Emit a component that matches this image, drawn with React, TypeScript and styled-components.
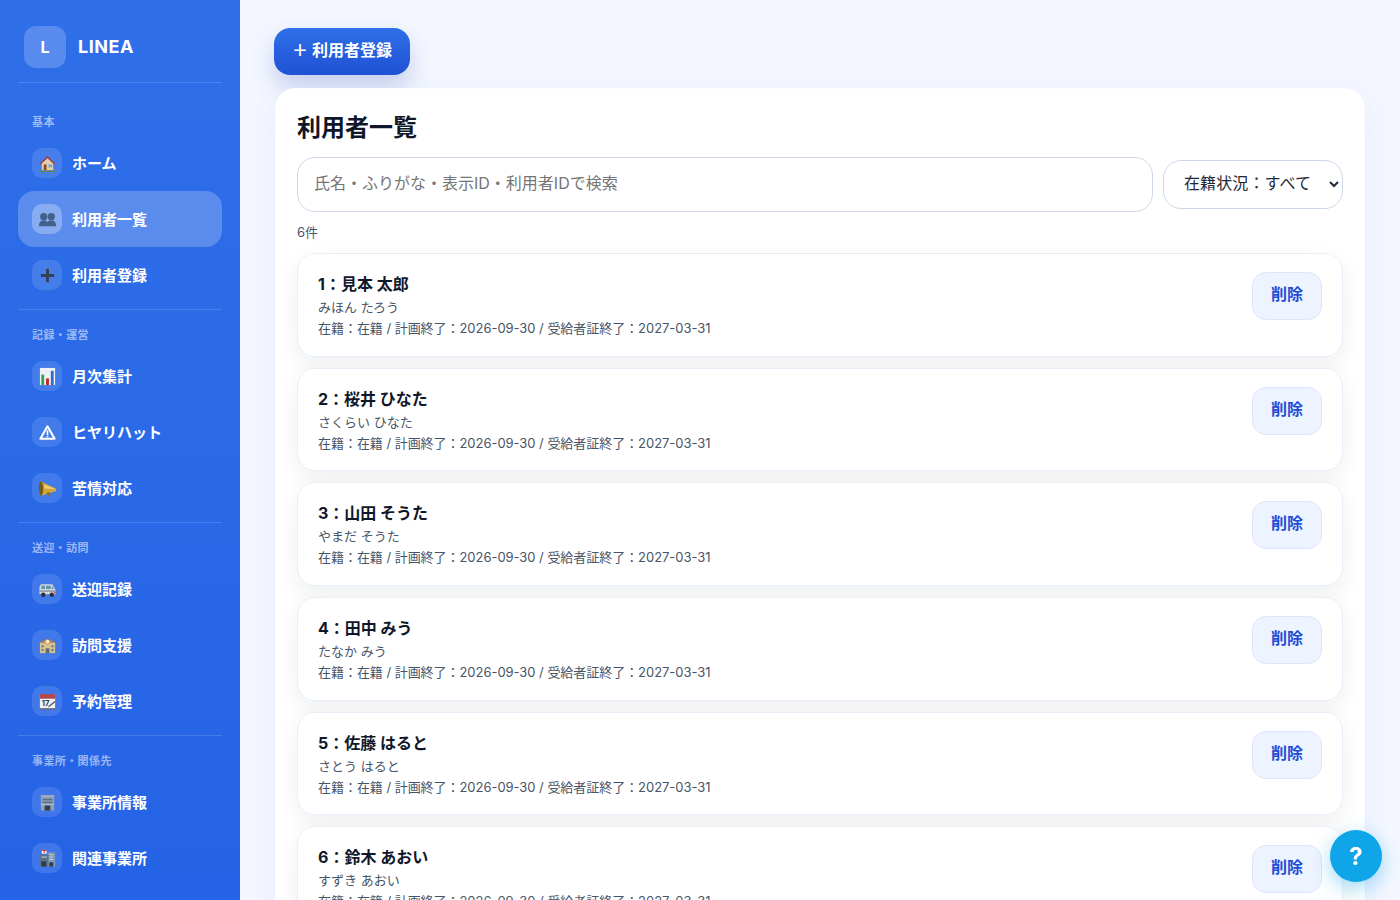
import React from "react";
import styled, { createGlobalStyle } from "styled-components";

const Global = createGlobalStyle`
  html, body { margin: 0; height: 900px; overflow: hidden; }
  body { font-family: Inter, "Noto Sans CJK JP", sans-serif; background: #f4f7ff; color: #0f172a; }
  * { box-sizing: border-box; }
`;
const Shell = styled.div`display: flex; height: 900px; overflow: hidden;`;
const Sidebar = styled.aside`
  width: 240px; flex: none; height: 900px; overflow: hidden; padding: 26px 18px 0;
  background: linear-gradient(180deg, #2f6fe9 0%, #2563e6 100%); color: #fff;
`;
const Brand = styled.div`
  display: flex; align-items: center; gap: 12px; padding: 0 6px 14px; height: 57px;
  border-bottom: 1px solid rgba(255,255,255,.14); margin-bottom: 31px;
`;
const BrandMark = styled.div`
  width: 42px; height: 42px; border-radius: 12px; background: rgba(255,255,255,.2);
  display: flex; align-items: center; justify-content: center; font-weight: 700; font-size: 16px;
`;
const BrandName = styled.div`font-size: 18px; font-weight: 700; letter-spacing: .5px; padding-bottom: 2px;`;
const Section = styled.div`
  & + & { border-top: 1px solid rgba(255,255,255,.14); margin-top: 6px; padding-top: 17px; }
`;
const SectionLabel = styled.div`
  font-size: 11px; line-height: 16px; font-weight: 600; color: rgba(255,255,255,.55); letter-spacing: .4px;
  padding-left: 14px; margin-bottom: 4px; height: 17px;
`;
const NavItem = styled.div<{ $active?: boolean }>`
  display: flex; align-items: center; gap: 10px; height: 56px; padding: 0 14px; border-radius: 16px;
  font-size: 15px; font-weight: 600; color: #fff;
  background: ${p => (p.$active ? "rgba(255,255,255,.22)" : "transparent")};
`;
const NavText = styled.span`padding-bottom: 2px;`;
const NavIcon = styled.span<{ $active?: boolean }>`
  width: 30px; height: 30px; border-radius: 10px; flex: none;
  display: flex; align-items: center; justify-content: center;
  background: ${p => (p.$active ? "rgba(255,255,255,.28)" : "rgba(255,255,255,.12)")};
`;
const Glyph = styled.svg`width: 19px; height: 19px; display: block;`;
const Main = styled.main`flex: 1; min-width: 0; padding: 28px 35px 0 34px;`;
const AddButton = styled.button`
  display: block; width: 136px; height: 47px; border: 0; border-radius: 16px; color: #fff; padding: 0 0 5px;
  font: 700 16px Inter, "Noto Sans CJK JP", sans-serif;
  background: linear-gradient(180deg, #2f6fe9, #1f52d4);
  box-shadow: 0 12px 24px rgba(30, 64, 175, .22); margin-bottom: 13px;
`;
const Panel = styled.section`
  margin-left: 1px; background: #fff; border-radius: 20px; padding: 21px 21px 0;
  border: 1px solid #fbfcff; box-shadow: 0 10px 30px rgba(37,99,235,.07); height: 830px; overflow: hidden;
`;
const Title = styled.h1`font-size: 24px; line-height: 36px; font-weight: 700; margin: 0 0 11px; color: #0f172a;`;
const Filters = styled.div`display: flex; align-items: center; gap: 10px;`;
const Search = styled.input`
  flex: 1; height: 55px; border: 1px solid #ccd7e8; border-radius: 18px; padding: 0 16px 3px;
  font: 400 16px Inter, "Noto Sans CJK JP", sans-serif; outline: none; background: #fff;
  &::placeholder { color: #757575; }
`;
const Select = styled.select`
  width: 180px; height: 49px; border: 1px solid #ccd7e8; border-radius: 18px; padding: 0 0 3px 16px;
  background: #fff; color: #1f2937; font: 400 16px Inter, "Noto Sans CJK JP", sans-serif; letter-spacing: .1px;
`;
const Count = styled.div`font-size: 13px; line-height: 20px; color: #475569; margin: 10px 0 11px;`;
const List = styled.div`display: flex; flex-direction: column; gap: 11px;`;
const Row = styled.article`
  display: flex; justify-content: space-between; align-items: flex-start; height: 103.7px;
  padding: 18px 20px; border: 1px solid #e8effb; border-radius: 18px; background: #fff;
  box-shadow: 0 8px 22px rgba(15,23,42,.07);
`;
const RowName = styled.div`font-size: 16px; line-height: 24px; font-weight: 700; color: #0f172a; margin-bottom: 1px;`;
const RowKana = styled.div`font-size: 13px; line-height: 20px; color: #475569;`;
const RowMeta = styled.div`font-size: 13px; line-height: 20px; color: #475569; letter-spacing: -.04px; margin-top: 1px;`;
const DeleteButton = styled.button`
  width: 70px; height: 48px; border: 1px solid #dbe6fb; border-radius: 14px; background: #eef4ff; color: #1d4ed8;
  font: 700 16px Inter, "Noto Sans CJK JP", sans-serif; padding: 0 0 6px;
`;
const Help = styled.button`
  position: fixed; right: 18px; bottom: 18px; width: 52px; height: 52px; border-radius: 50%; border: 0;
  background: #0ea5e9; color: #fff; font: 700 24px Inter, sans-serif; box-shadow: 0 6px 20px rgba(14,165,233,.4);
`;

const icons: Record<string, React.ReactNode> = {
  home: <>
    <path d="M2 10 10 2l8 8-1 1-7-6.500L3 11z" fill="#a5393a" />
    <path d="M4 10 10 4.500l6 5.500v7H4z" fill="#e6cfa6" />
    <rect x="6" y="11" width="3" height="6" fill="#8a4b32" /><rect x="11" y="11" width="4" height="3" fill="#6fa9d8" />
    <path d="M1.500 17.500h17V19h-17z" fill="#5f8a56" />
  </>,
  people: <g fill="#41618a">
    <circle cx="6" cy="7" r="3.800" /><path d="M1 17c0-4 1.500-6 5-6s5 2 5 6z" />
    <circle cx="14" cy="7" r="3.800" /><path d="M9 17c0-4 1.500-6 5-6s5 2 5 6z" />
  </g>,
  plus: <path d="M8.500 3h3v5.500H17v3h-5.500V17h-3v-5.500H3v-3h5.500z" fill="#364152" />,
  chart: <>
    <rect x="2" y="1" width="16" height="18" fill="#eef2f6" />
    <rect x="3.500" y="8" width="3" height="11" fill="#2aa84a" /><rect x="8.500" y="12" width="3" height="7" fill="#c8202a" /><rect x="13.500" y="4" width="3" height="15" fill="#2a6fc9" />
  </>,
  warning: <>
    <path d="M10 3.500 17.500 16.500h-15z" fill="none" stroke="#fff" strokeWidth="2.200" strokeLinejoin="round" />
    <path d="M9.100 7.500h1.800v5H9.100zM9.100 13.300h1.800v1.600H9.100z" fill="#fff" />
  </>,
  megaphone: <>
    <path d="M3 2.500 19 10v2.500L3.500 17.500z" fill="#d2a738" />
    <path d="M3 2.500c1.500 0 2.500 3.500 2.500 7.500s-1 7.500-2 7.500S1 14 1 10s.500-7.500 2-7.500z" fill="#7a5c17" />
    <path d="M7 6 18 10.500 7 10z" fill="#ecd27a" />
    <path d="M9 14.500l3-1 1 3.500-2.500.8z" fill="#8f7023" />
  </>,
  van: <>
    <path d="M3 4.500h12l3.500 6v4.500h-17V8z" fill="#d5d9df" />
    <rect x="3.500" y="6" width="4" height="3.500" fill="#5f97ad" /><rect x="8.500" y="6" width="5" height="3.500" fill="#5f97ad" /><path d="M14.500 6l2.500 3.500h-2.500z" fill="#5f97ad" />
    <rect x="1.500" y="11" width="17" height="1.300" fill="#7d8794" /><rect x="16.800" y="12.500" width="1.700" height="1.500" fill="#d23a3a" />
    <circle cx="5.500" cy="15.500" r="2.300" fill="#2b3038" /><circle cx="14.500" cy="15.500" r="2.300" fill="#2b3038" />
  </>,
  school: <>
    <rect x="2" y="7" width="16" height="11" fill="#d9c48f" /><path d="M1.500 7 7 4.500h6L18.500 7z" fill="#d77f3a" />
    <circle cx="10" cy="6" r="2.700" fill="#f2e6c2" stroke="#a0713a" strokeWidth=".7" />
    <rect x="8" y="13" width="4" height="5" fill="#5d6a74" />
    <g fill="#6f8a9a"><rect x="3.500" y="9.500" width="2.500" height="2.500" /><rect x="14" y="9.500" width="2.500" height="2.500" /><rect x="3.500" y="13.500" width="2.500" height="2.500" /><rect x="14" y="13.500" width="2.500" height="2.500" /></g>
  </>,
  calendar: <>
    <rect x="2" y="2" width="16" height="16" rx="1" fill="#f1f2f4" /><path d="M3 2h14a1 1 0 0 1 1 1v4H2V3a1 1 0 0 1 1-1z" fill="#b04a4f" />
    <rect x="2" y="17" width="16" height="1.500" fill="#656b75" />
    <text x="4" y="15" fontSize="8" fontWeight="700" fontFamily="Inter, sans-serif" fill="#333a45">17</text>
    <path d="M11 15.500 18 10" stroke="#4a5058" strokeWidth="1.200" />
  </>,
  office: <>
    <rect x="3" y="2.500" width="14" height="16" fill="#8ea2b3" /><rect x="3" y="2.500" width="14" height="1.500" fill="#a9b5bf" />
    <g fill="#54708a"><rect x="5" y="6" width="10" height="1.700" /><rect x="5" y="9" width="10" height="1.700" /></g>
    <rect x="7" y="13" width="6" height="5.500" fill="#333f4d" /><rect x="3" y="12" width="14" height=".8" fill="#c4ccd4" />
  </>,
  dept: <>
    <rect x="10" y="3.500" width="8" height="15" fill="#7d99b3" /><rect x="2" y="6" width="9" height="12.500" fill="#59738c" />
    <rect x="4" y="1" width="5" height="4" fill="#f4f4f4" /><rect x="6" y="1.500" width="1" height="3" fill="#d22f37" /><rect x="4" y="1" width="5" height="1" fill="#d22f37" />
    <g fill="#c8d5e0"><rect x="12" y="5.500" width="4" height="1" /><rect x="12" y="8" width="4" height="1" /><rect x="12" y="10.500" width="4" height="1" /><rect x="3.500" y="8" width="6" height="1" /></g>
    <rect x="3.500" y="13" width="5" height="5.500" fill="#2f3b48" /><rect x="12" y="14" width="4" height="4.500" fill="#2f3b48" />
  </>,
};

type Item = { icon: string; name: string; active?: boolean };
const sections: { label: string; items: Item[] }[] = [
  { label: "基本", items: [{ icon: "home", name: "ホーム" }, { icon: "people", name: "利用者一覧", active: true }, { icon: "plus", name: "利用者登録" }] },
  { label: "記録・運営", items: [{ icon: "chart", name: "月次集計" }, { icon: "warning", name: "ヒヤリハット" }, { icon: "megaphone", name: "苦情対応" }] },
  { label: "送迎・訪問", items: [{ icon: "van", name: "送迎記録" }, { icon: "school", name: "訪問支援" }, { icon: "calendar", name: "予約管理" }] },
  { label: "事業所・関係先", items: [{ icon: "office", name: "事業所情報" }, { icon: "dept", name: "関連事業所" }] },
];
const people = [
  ["1：見本 太郎", "みほん たろう"], ["2：桜井 ひなた", "さくらい ひなた"], ["3：山田 そうた", "やまだ そうた"],
  ["4：田中 みう", "たなか みう"], ["5：佐藤 はると", "さとう はると"], ["6：鈴木 あおい", "すずき あおい"],
];

export default function App() {
  return (
    <Shell>
      <Global />
      <Sidebar>
        <Brand><BrandMark>L</BrandMark><BrandName>LINEA</BrandName></Brand>
        {sections.map(s => (
          <Section key={s.label}>
            <SectionLabel>{s.label}</SectionLabel>
            {s.items.map(it => (
              <NavItem key={it.name} $active={it.active}>
                <NavIcon $active={it.active}><Glyph viewBox="0 0 20 20">{icons[it.icon]}</Glyph></NavIcon>
                <NavText>{it.name}</NavText>
              </NavItem>
            ))}
          </Section>
        ))}
      </Sidebar>
      <Main>
        <AddButton>＋ 利用者登録</AddButton>
        <Panel>
          <Title>利用者一覧</Title>
          <Filters>
            <Search placeholder="氏名・ふりがな・表示ID・利用者IDで検索" />
            <Select defaultValue="all"><option value="all">在籍状況：すべて</option></Select>
          </Filters>
          <Count>6件</Count>
          <List>
            {people.map(p => (
              <Row key={p[0]}>
                <div>
                  <RowName>{p[0]}</RowName>
                  <RowKana>{p[1]}</RowKana>
                  <RowMeta>在籍：在籍 / 計画終了：2026-09-30 / 受給者証終了：2027-03-31</RowMeta>
                </div>
                <DeleteButton>削除</DeleteButton>
              </Row>
            ))}
          </List>
        </Panel>
      </Main>
      <Help>?</Help>
    </Shell>
  );
}
